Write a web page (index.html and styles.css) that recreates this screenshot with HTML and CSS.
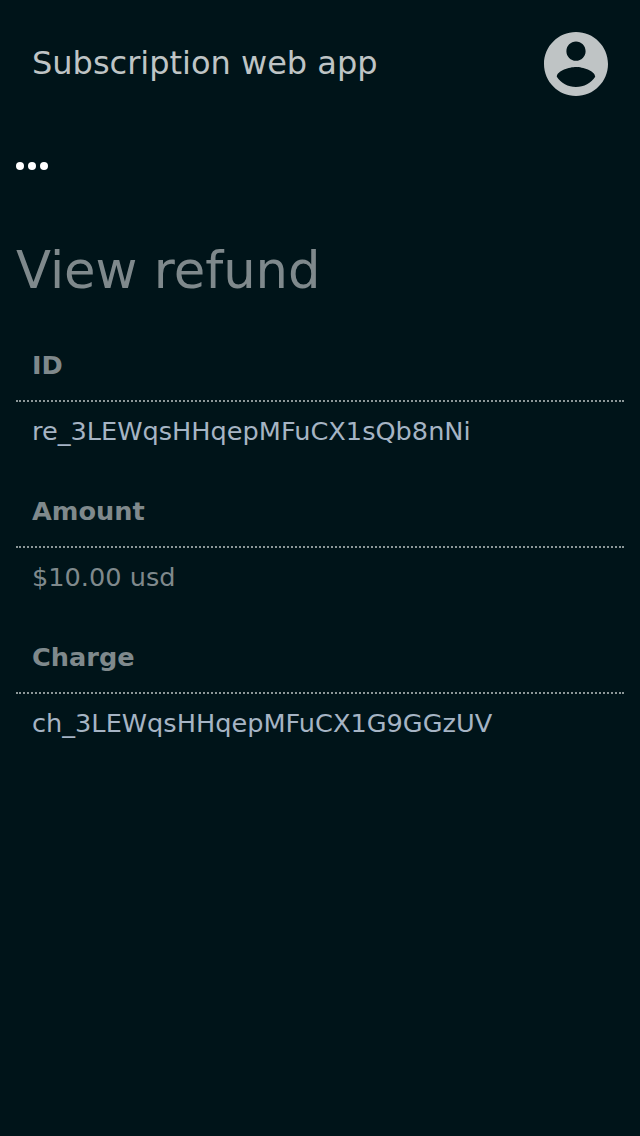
FILE: index.html
```html
<!DOCTYPE html>
<html lang="en">
<head>
<meta charset="utf-8">
<title>Subscription web app</title>
<link rel="stylesheet" href="styles.css">
</head>
<body>
<header class="header">
  <span class="brand">Subscription web app</span>
  <svg class="account" viewBox="2 2 20 20" aria-label="Account"><path fill="currentColor" d="M12 2C6.48 2 2 6.48 2 12s4.48 10 10 10 10-4.480 10-10S17.520 2 12 2zm0 3c1.660 0 3 1.340 3 3s-1.340 3-3 3-3-1.340-3-3 1.340-3 3-3zm0 14.200c-2.500 0-4.710-1.280-6-3.220.030-1.990 4-3.080 6-3.080 1.990 0 5.970 1.090 6 3.080-1.290 1.940-3.500 3.220-6 3.220z"/></svg>
</header>
<main class="content">
  <nav class="menu"><i class="dot"></i><i class="dot"></i><i class="dot"></i></nav>
  <h1 class="title">View refund</h1>
  <dl class="details">
    <dt class="label">ID</dt>
    <dd class="value"><a class="link">re_3LEWqsHHqepMFuCX1sQb8nNi</a></dd>
    <dt class="label">Amount</dt>
    <dd class="value">$10.00 usd</dd>
    <dt class="label">Charge</dt>
    <dd class="value"><a class="link">ch_3LEWqsHHqepMFuCX1G9GGzUV</a></dd>
  </dl>
</main>
</body>
</html>
```
FILE: styles.css
```css
body {
  margin: 0;
  min-height: 1136px;
  background: #001419;
  color: #7f898c;
  font-family: "DejaVu Sans", sans-serif;
}
.header {
  display: flex;
  align-items: center;
  justify-content: space-between;
  height: 128px;
  padding: 0 32px;
  color: #bfc4c5;
}
.brand {
  font-size: 32px;
  line-height: 38px;
  padding-bottom: 2px;
}
.account {
  width: 64px;
  height: 64px;
}
.content {
  padding: 34px 16px 0;
}
.menu {
  display: flex;
  gap: 4px;
}
.dot {
  width: 8px;
  height: 8px;
  border-radius: 50%;
  background: #fff;
}
.title {
  margin: 70px 0 0;
  font-size: 51.200px;
  font-weight: 400;
  line-height: 60px;
}
.details {
  margin: 30px 0 0;
}
.label {
  height: 72px;
  padding: 0 16px;
  box-sizing: border-box;
  border-bottom: 2px dotted #8c9798;
  font-size: 25.600px;
  font-weight: 700;
  line-height: 70px;
}
.value {
  height: 74px;
  margin: 0;
  padding: 14px 16px 0;
  box-sizing: border-box;
  font-size: 25.600px;
  line-height: 30px;
}
.link {
  color: #a6b4c4;
}
```
